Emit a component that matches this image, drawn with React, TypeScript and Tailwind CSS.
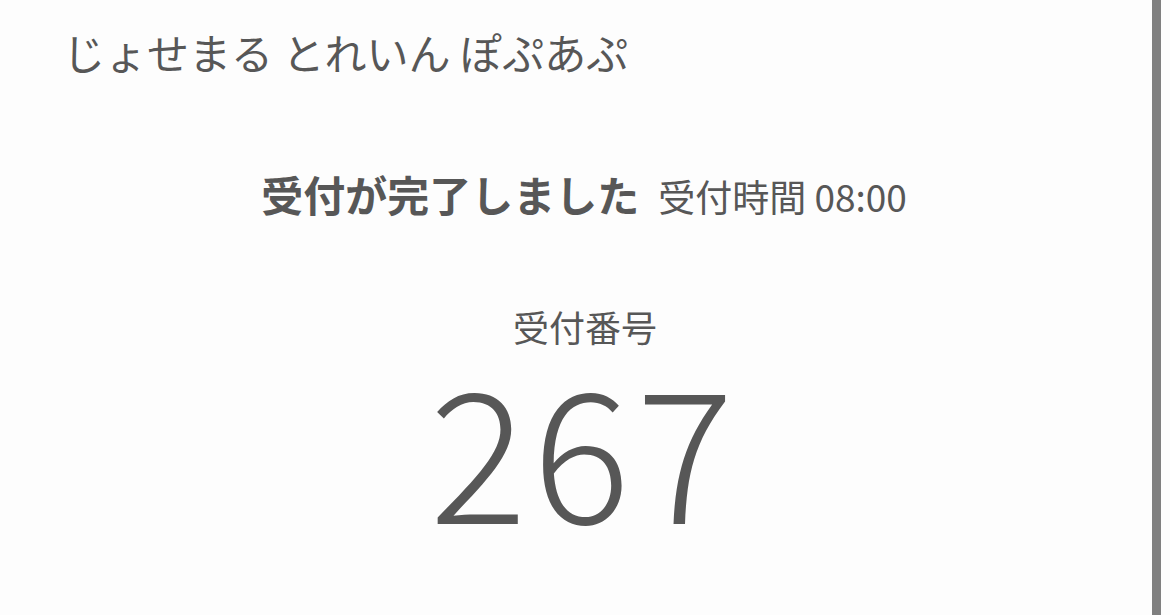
import React from "react";

export default function App() {
  const font = { fontFamily: '"Noto Sans CJK JP", "Noto Sans", sans-serif' };
  return (
    <div className="flex h-[615px] w-[1170px] overflow-hidden bg-[#fdfdfd] text-[#575757]" style={font}>
      <div className="flex flex-1 flex-col">
        <div className="pl-[63px] pt-[22px] text-[42px] leading-[60px] font-normal">じょせまる とれいん ぽぷあぷ</div>
        <div className="mt-[82px] flex items-baseline justify-center pl-[16px]">
          <span className="text-[42px] font-bold leading-[60px]">受付が完了しました</span>
          <span className="ml-[19px] text-[37px] leading-[60px]">受付時間 08:00</span>
        </div>
        <div className="mt-[75px] text-center pl-[18px] text-[36px] leading-[50px]">受付番号</div>
        <div className="mt-[3px] text-center pl-[17px] text-[182px] font-light leading-none tracking-[6px]">267</div>
      </div>
      <div className="h-full w-[9px] bg-[#808080]" />
      <div className="h-full w-[9px] bg-[#fdfdfd]" />
    </div>
  );
}
